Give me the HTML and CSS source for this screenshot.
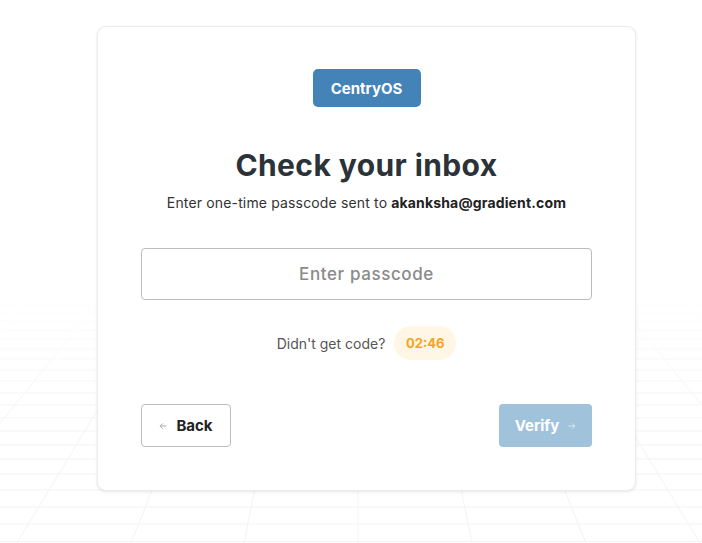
FILE: index.html
```html
<!DOCTYPE html>
<html lang="en">
<head>
<meta charset="utf-8">
<title>Check your inbox</title>
<link rel="stylesheet" href="styles.css">
</head>
<body>
<svg class="grid-bg" width="702" height="543" viewBox="0 0 702 543" aria-hidden="true">
  <defs>
    <linearGradient id="fade" x1="0" y1="0" x2="0" y2="1">
      <stop offset="0.52" stop-color="#fff" stop-opacity="0"/>
      <stop offset="0.78" stop-color="#fff" stop-opacity="1"/>
    </linearGradient>
    <mask id="m"><rect width="702" height="543" fill="url(#fade)"/></mask>
  </defs>
  <g mask="url(#m)" stroke="#f3f3f3" stroke-width="1" fill="none">
    <path d="M0 305H702M0 313H702M0 321H702M0 330H702M0 339H702M0 349H702M0 359H702M0 370H702M0 381H702M0 393H702M0 405H702M0 418H702M0 431H702M0 445H702M0 459H702M0 474H702M0 490H702M0 507H702M0 524H702M0 541.5H702"/>
    <path d="M358 290V543M295 290L244 543M421 290L472 543M233 290L131 543M483 290L586 543M170 290L17 543M546 290L700 543M108 290L-97 543M608 290L814 543M45 290L-211 543M671 290L928 543"/>
  </g>
</svg>
<main class="page">
  <section class="card">
    <div class="logo">CentryOS</div>
    <h1 class="title">Check your inbox</h1>
    <p class="subtitle">Enter one-time passcode sent to <strong>akanksha@gradient.com</strong></p>
    <input class="code-input" type="text" placeholder="Enter passcode">
    <div class="resend">
      <span class="resend-text">Didn't get code?</span>
      <span class="timer">02:46</span>
    </div>
    <div class="actions">
      <button class="btn btn-back" type="button">
        <svg class="arrow" width="8" height="8" viewBox="0 0 8 8"><path d="M7 4H1.2M3.5 1.7L1.2 4L3.5 6.3" stroke="#a8a8a8" stroke-width="1" fill="none" stroke-linecap="round" stroke-linejoin="round"/></svg>
        <span>Back</span>
      </button>
      <button class="btn btn-verify" type="button">
        <span>Verify</span>
        <svg class="arrow" width="8" height="8" viewBox="0 0 8 8"><path d="M1 4H6.8M4.5 1.7L6.8 4L4.5 6.3" stroke="#dbe8f2" stroke-width="1" fill="none" stroke-linecap="round" stroke-linejoin="round"/></svg>
      </button>
    </div>
  </section>
</main>
</body>
</html>
```

FILE: styles.css
```css
* { box-sizing: border-box; }

html, body {
  margin: 0;
  padding: 0;
  background: #ffffff;
  width: 702px;
  height: 543px;
  overflow: hidden;
  font-family: Inter, "Noto Sans", "Liberation Sans", sans-serif;
  color: #2b3137;
}

.grid-bg {
  position: absolute;
  left: 0;
  top: 0;
  z-index: 0;
}

.page {
  position: relative;
  z-index: 1;
  padding: 26px 0 0 97px;
}

.card {
  width: 539px;
  height: 465px;
  background: #fff;
  border: 1px solid #ececec;
  border-radius: 9px;
  box-shadow: 0 1px 3px rgba(0, 0, 0, 0.1);
  padding: 42px 43px 0;
  display: flex;
  flex-direction: column;
  align-items: center;
}

.logo {
  width: 108px;
  height: 38px;
  border-radius: 5px;
  background: #4383b8;
  color: #fff;
  font-weight: 700;
  font-size: 15px;
  display: flex;
  align-items: center;
  justify-content: center;
}

.title {
  margin: 40px 0 0;
  font-size: 30px;
  line-height: 36px;
  font-weight: 700;
  color: #2b3238;
  letter-spacing: 0.4px;
}

.subtitle {
  margin: 10px 0 0;
  font-size: 14px;
  line-height: 20px;
  color: #333;
  letter-spacing: 0.15px;
}

.subtitle strong {
  color: #222;
  font-weight: 700;
}

.code-input {
  margin-top: 35px;
  width: 451px;
  height: 52px;
  border: 1px solid #bcbcbc;
  border-radius: 4px;
  font-family: inherit;
  font-size: 17px;
  letter-spacing: 0.6px;
  text-align: center;
  color: #333;
  outline: none;
}

.code-input::placeholder {
  color: #8a8a8a;
  font-weight: 500;
}

.resend {
  margin-top: 26px;
  display: flex;
  align-items: center;
  gap: 9px;
}

.resend-text {
  font-size: 14px;
  color: #555;
}

.timer {
  height: 34px;
  width: 62px;
  border-radius: 17px;
  background: #fff6e6;
  color: #f5a51c;
  font-weight: 700;
  font-size: 13px;
  display: flex;
  align-items: center;
  justify-content: center;
}

.actions {
  margin-top: 44px;
  width: 451px;
  display: flex;
  justify-content: space-between;
}

.btn {
  height: 43px;
  border-radius: 4px;
  font-family: inherit;
  font-size: 15px;
  font-weight: 700;
  display: flex;
  align-items: center;
  justify-content: center;
  gap: 9px;
  padding: 0;
  cursor: pointer;
}

.btn-back {
  width: 90px;
  background: #fff;
  border: 1px solid #bdbdbd;
  color: #222;
}

.btn-verify {
  width: 93px;
  background: #a1c2db;
  border: none;
  color: #fff;
}
```
